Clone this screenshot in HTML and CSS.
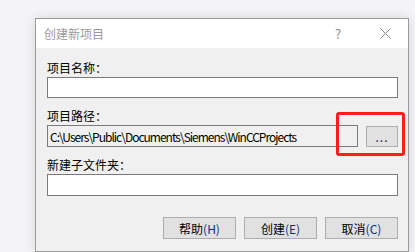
FILE: index.html
```html
<!DOCTYPE html>
<html lang="zh-CN">

<head>
  <meta charset="UTF-8" />
  <title>创建新项目</title>
  <link rel="stylesheet" href="styles.css">
</head>

<body>
  <div class="dialog">
    <div class="title-bar">
      <span class="title">创建新项目</span>
      <span class="help-btn">?</span>
      <span class="close-btn">
        <svg width="11" height="11" viewBox="0 0 11 11">
          <path d="M0.5 0.5 L10.5 10.5 M10.5 0.5 L0.5 10.5" stroke="#8a8a8a" stroke-width="1" fill="none" />
        </svg>
      </span>
    </div>

    <div class="dialog-body">
      <label class="field-label">项目名称：</label>
      <input type="text" class="text-input" />

      <label class="field-label">项目路径：</label>
      <div class="path-row">
        <input type="text" class="text-input readonly" value="C:\Users\Public\Documents\Siemens\WinCCProjects" readonly />
        <button class="browse-btn">...</button>
        <div class="highlight"></div>
      </div>

      <label class="field-label">新建子文件夹：</label>
      <input type="text" class="text-input last" />

      <div class="actions">
        <button class="action-btn">帮助<span class="key">(H)</span></button>
        <button class="action-btn">创建<span class="key">(E)</span></button>
        <button class="action-btn">取消<span class="key">(C)</span></button>
      </div>
    </div>
  </div>
</body>

</html>
```

FILE: styles.css
```css
* {
  margin: 0;
  padding: 0;
  box-sizing: border-box;
  font-family: "Noto Sans CJK SC", "Noto Sans", sans-serif;
}

body {
  background-color: #f4f3f8;
  width: 415px;
  height: 252px;
  overflow: hidden;
  padding: 18px 0 0 35px;
}

.dialog {
  width: 374px;
  height: 234px;
  background: #f0f0f0;
  border: 1px solid #9a9a9a;
  box-shadow: 0 0 10px rgba(0, 0, 0, 0.12);
  display: flex;
  flex-direction: column;
}

.title-bar {
  height: 29px;
  background: #ffffff;
  display: flex;
  align-items: center;
  padding-left: 8px;
}

.title {
  font-size: 12px;
  color: #9a9a9a;
  flex: 1;
}

.help-btn {
  font-size: 13px;
  color: #8a8a8a;
  width: 12px;
  margin-right: 33px;
}

.close-btn {
  display: flex;
  margin-right: 17px;
}

.dialog-body {
  flex: 1;
  display: flex;
  flex-direction: column;
  padding: 12px 10px 0 11px;
}

.field-label {
  font-size: 12px;
  line-height: 16px;
  color: #000000;
  margin-bottom: 1px;
}

.text-input {
  width: 100%;
  height: 21px;
  border: 1px solid #7a7a7a;
  background: #ffffff;
  font-size: 12px;
  padding: 0 3px;
  outline: none;
  margin-bottom: 10px;
  color: #000000;
}

.text-input.last {
  height: 22px;
}

.path-row {
  position: relative;
  display: flex;
  align-items: flex-start;
  margin-bottom: 10px;
}

.path-row .text-input {
  width: 311px;
  height: 22px;
  margin-bottom: 0;
}

.text-input.readonly {
  background: #f0f0f0;
  border-color: #7a7a7a;
  padding: 0 2px;
  letter-spacing: -1px;
}

.browse-btn {
  width: 32px;
  height: 21px;
  margin-left: 8px;
  margin-top: 1px;
  background: #e1e1e1;
  border: 1px solid #adadad;
  font-size: 12px;
  letter-spacing: 1px;
  color: #2a1a4a;
}

.highlight {
  position: absolute;
  left: 289px;
  top: -13px;
  width: 69px;
  height: 44px;
  border: 3px solid #fa1e1e;
  border-radius: 3px;
}

.actions {
  display: flex;
  justify-content: flex-end;
  gap: 8px;
  margin-top: 11px;
}

.action-btn {
  width: 73px;
  height: 22px;
  background: #e1e1e1;
  border: 1px solid #adadad;
  font-size: 12px;
  color: #000000;
}

.key {
  color: #0a2f8a;
}
```
